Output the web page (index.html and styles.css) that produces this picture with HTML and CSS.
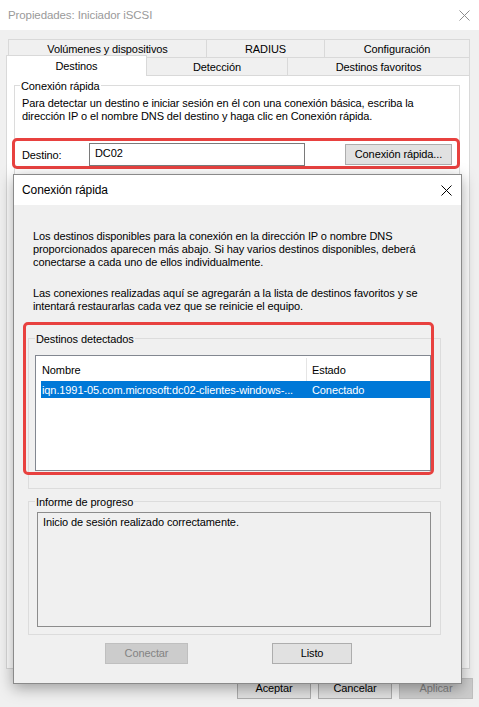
FILE: index.html
```html
<!DOCTYPE html>
<html lang="es">
<head>
<meta charset="utf-8">
<title>Propiedades: Iniciador iSCSI</title>
<link rel="stylesheet" href="styles.css">
</head>
<body>
<div class="window">
  <div class="titlebar">
    <span class="title">Propiedades: Iniciador iSCSI</span>
    <svg class="close-x close-gray" viewBox="0 0 11 11"><path d="M0.5 0.5 L10.5 10.5 M10.5 0.5 L0.5 10.5"/></svg>
  </div>

  <div class="tabs">
    <div class="tabrow back">
      <div class="tab w-vol">Volúmenes y dispositivos</div>
      <div class="tab w-radius">RADIUS</div>
      <div class="tab w-config last">Configuración</div>
    </div>
    <div class="tabrow front">
      <div class="tab tab-sel w-dest">Destinos</div>
      <div class="tab w-det no-left">Detección</div>
      <div class="tab w-fav last">Destinos favoritos</div>
    </div>
  </div>

  <div class="panel">
    <fieldset class="group group-quick">
      <legend>Conexión rápida</legend>
      <p class="quick-text">Para detectar un destino e iniciar sesión en él con una conexión básica, escriba la<br>dirección IP o el nombre DNS del destino y haga clic en Conexión rápida.</p>
      <div class="target-row">
        <span class="target-label">Destino:</span>
        <div class="input">DC02</div>
        <button class="btn btn-quick">Conexión rápida...</button>
      </div>
    </fieldset>
  </div>

  <div class="footer">
    <button class="btn btn-foot">Aceptar</button>
    <button class="btn btn-foot">Cancelar</button>
    <button class="btn btn-foot disabled">Aplicar</button>
  </div>

  <div class="highlight hl-target"></div>

  <div class="dialog">
    <div class="dlg-title">
      <span>Conexión rápida</span>
      <svg class="close-x" viewBox="0 0 11 11"><path d="M0.5 0.5 L10.5 10.5 M10.5 0.5 L0.5 10.5"/></svg>
    </div>
    <div class="dlg-body">
      <p class="dlg-text">Los destinos disponibles para la conexión en la dirección IP o nombre DNS<br>proporcionados aparecen más abajo. Si hay varios destinos disponibles, deberá<br>conectarse a cada uno de ellos individualmente.</p>
      <p class="dlg-text second">Las conexiones realizadas aquí se agregarán a la lista de destinos favoritos y se<br>intentará restaurarlas cada vez que se reinicie el equipo.</p>

      <fieldset class="group group-found">
        <legend>Destinos detectados</legend>
        <div class="list">
          <div class="list-head">
            <div class="col-name">Nombre</div>
            <div class="col-state">Estado</div>
          </div>
          <div class="list-row selected">
            <div class="cell-name">iqn.1991-05.com.microsoft:dc02-clientes-windows-...</div>
            <div class="cell-state">Conectado</div>
          </div>
        </div>
      </fieldset>

      <fieldset class="group group-progress">
        <legend>Informe de progreso</legend>
        <div class="progress-box">Inicio de sesión realizado correctamente.</div>
      </fieldset>

      <div class="dlg-buttons">
        <button class="btn btn-connect disabled">Conectar</button>
        <button class="btn btn-done">Listo</button>
      </div>
    </div>
  </div>

  <div class="highlight hl-list"></div>
</div>
</body>
</html>
```

FILE: styles.css
```css
* { box-sizing: border-box; }

body {
  margin: 0;
  background: #f0f0f0;
  font-family: "Liberation Sans", Arial, sans-serif;
  font-size: 11px;
  letter-spacing: -0.1px;
  color: #000;
}

.window {
  position: relative;
  width: 479px;
  height: 707px;
  overflow: hidden;
  background: #f0f0f0;
}

.titlebar {
  height: 30px;
  background: #fff;
  display: flex;
  align-items: center;
  justify-content: space-between;
  padding: 0 9px 0 8px;
}

.title {
  color: #9a9a9a;
  font-size: 11.5px;
}

.close-x {
  width: 11px;
  height: 11px;
  fill: none;
  stroke: #000;
  stroke-width: 1;
}

.close-gray { stroke: #8d8d8d; }

/* Tabs */
.tabs { margin-top: 9px; }

.tabrow {
  display: flex;
  height: 18px;
}

.tabrow.back { margin-left: 8px; }
.tabrow.front { margin-left: 6px; }

.tab {
  display: flex;
  align-items: center;
  justify-content: center;
  background: #f0f0f0;
  border-top: 1px solid #d9d9d9;
  border-left: 1px solid #d9d9d9;
  white-space: nowrap;
}

.tab.last { border-right: 1px solid #d9d9d9; }
.tab.no-left { border-left: none; }

.w-vol { width: 198px; }
.w-radius { width: 118px; }
.w-config { width: 146px; }
.w-dest { width: 141px; }
.w-det { width: 140px; }
.w-fav { width: 183px; }

.tab-sel {
  position: relative;
  z-index: 1;
  height: 21px;
  margin-top: -2px;
  margin-bottom: -1px;
  background: #fff;
  border-right: 1px solid #d9d9d9;
}

/* Panel */
.panel {
  margin-left: 6px;
  width: 464px;
  height: 594px;
  background: #fff;
  border: 1px solid #d9d9d9;
}

.group {
  margin: 0;
  padding: 0;
  min-width: 0;
  border: 1px solid #dcdcdc;
}

.group legend {
  padding: 3px 1px 0;
  line-height: 13px;
}

.group-quick {
  margin: 1px 0 0 7px;
  width: 446px;
  padding-bottom: 10px;
}

.group-quick legend { margin-left: 5px; }

.quick-text {
  margin: 4px 0 0 7px;
  line-height: 13px;
  white-space: nowrap;
}

.target-row {
  display: flex;
  align-items: center;
  margin: 20px 0 0 7px;
  height: 23px;
}

.target-label { width: 67px; }

.input {
  width: 216px;
  height: 23px;
  background: #fff;
  border: 1px solid #7a7a7a;
  padding: 3px 0 0 5px;
  line-height: 13px;
}

.btn {
  font-family: inherit;
  font-size: 11px;
  letter-spacing: -0.1px;
  color: #000;
  background: #e1e1e1;
  border: 1px solid #adadad;
  padding: 0;
  height: 21px;
  line-height: 19px;
}

.btn.disabled {
  background: #cccccc;
  border-color: #bfbfbf;
  color: #838383;
}

.btn-quick {
  margin-left: 40px;
  width: 107px;
}

/* Footer */
.footer {
  display: flex;
  justify-content: flex-end;
  gap: 7px;
  margin-top: 9px;
  padding-right: 6px;
}

.btn-foot { width: 74px; }

/* Highlights */
.highlight {
  position: absolute;
  border: 3px solid #e8413f;
  border-radius: 5px;
  pointer-events: none;
}

.hl-target {
  left: 12px;
  top: 138px;
  width: 448px;
  height: 31px;
}

.hl-list {
  left: 23px;
  top: 322px;
  width: 411px;
  height: 153px;
}

/* Dialog */
.dialog {
  position: absolute;
  left: 13px;
  top: 174px;
  width: 449px;
  height: 510px;
  display: flex;
  flex-direction: column;
  background: #f0f0f0;
  border: 1px solid #8a8a8a;
  box-shadow: 0 4px 14px rgba(0, 0, 0, 0.35);
}

.dlg-title {
  height: 30px;
  flex: none;
  background: #fff;
  display: flex;
  align-items: center;
  justify-content: space-between;
  padding: 0 9px 0 8px;
  font-size: 12px;
}

.dlg-body {
  flex: 1;
  padding: 25px 0 0 14px;
}

.dlg-text {
  margin: 0 0 0 5px;
  line-height: 13px;
  white-space: nowrap;
}

.dlg-text.second { margin-top: 18px; }

.group-found {
  margin-top: 17px;
  width: 413px;
  padding-bottom: 17px;
}

.group-found legend,
.group-progress legend { margin-left: 6px; }

.list {
  margin: 9px 0 0 6px;
  width: 396px;
  height: 116px;
  background: #fff;
  border: 1px solid #828790;
}

.list-head {
  display: flex;
  height: 25px;
  align-items: stretch;
}

.col-name {
  width: 271px;
  padding-left: 6px;
  display: flex;
  align-items: center;
  border-right: 1px solid #e5e5e5;
  margin-top: 2px;
}

.col-state {
  padding-left: 5px;
  display: flex;
  align-items: center;
  margin-top: 2px;
}

.list-row {
  display: flex;
  align-items: center;
  height: 17px;
  white-space: nowrap;
}

.list-row.selected {
  margin-left: 5px;
  background: #0078d7;
  color: #fff;
}

.cell-name {
  width: 265px;
  padding-left: 1px;
  overflow: hidden;
}

.cell-state { padding-left: 6px; }

.group-progress {
  margin-top: 4px;
  width: 413px;
  padding-bottom: 7px;
}

.progress-box {
  margin: 3px 0 0 8px;
  width: 394px;
  height: 115px;
  border: 1px solid #8c8c8c;
  background: #f0f0f0;
  padding: 3px 0 0 5px;
  line-height: 13px;
}

.dlg-buttons {
  display: flex;
  margin-top: 8px;
  padding-left: 77px;
}

.btn-connect { width: 83px; }

.btn-done {
  width: 80px;
  margin-left: 84px;
}
```
